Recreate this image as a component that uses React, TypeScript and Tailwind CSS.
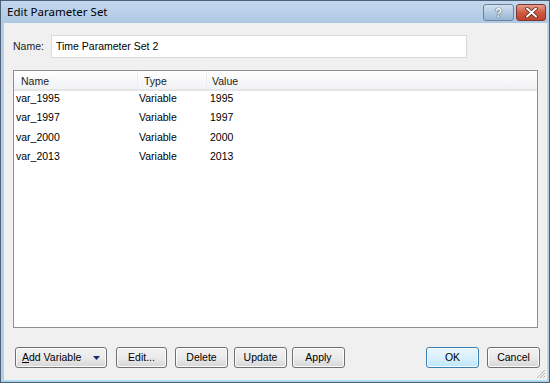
import React from "react";

const rows = [
  ["var_1995", "Variable", "1995"],
  ["var_1997", "Variable", "1997"],
  ["var_2000", "Variable", "2000"],
  ["var_2013", "Variable", "2013"],
];

function Btn({ children, className = "", ok = false }: { children: React.ReactNode; className?: string; ok?: boolean }) {
  return (
    <div
      className={
        "h-[21px] flex items-center justify-center rounded-[3px] border text-[10.5px] text-black " +
        (ok
          ? "border-[#3c7fb1] bg-gradient-to-b from-[#eaf6fd] via-[#d9f0fc] to-[#bee6fd] shadow-[inset_0_0_0_1px_#ffffff]"
          : "border-[#707070] bg-gradient-to-b from-[#f2f2f2] via-[#ebebeb] to-[#d6d6d6] shadow-[inset_0_0_0_1px_#fcfcfc]") +
        " " +
        className
      }
    >
      {children}
    </div>
  );
}

export default function App() {
  return (
    <div
      className="w-[550px] h-[383px] flex flex-col border border-[#4d6177] bg-[#b6cde6] overflow-hidden"
      style={{ fontFamily: '"Liberation Sans", Arial, sans-serif' }}
    >
      {/* Title bar */}
      <div className="h-[22px] flex items-center bg-gradient-to-b from-[#c3d8ee] to-[#aec8e3] relative">
        <span
          className="ml-[6px] text-[11.5px] text-black"
          style={{ fontFamily: '"Noto Sans", "Open Sans", sans-serif' }}
        >
          Edit Parameter Set
        </span>
        <div className="ml-auto mr-[3px] flex gap-[2px] self-start mt-[3px]">
          <div className="w-[31px] h-[17px] rounded-[3px] border border-[#6d829a] bg-gradient-to-b from-[#d4e2f0] via-[#b3cae2] to-[#9ab6d6] flex items-center justify-center">
            <span
              className="text-[12px] font-bold text-white leading-none"
              style={{ textShadow: "0 0 1px #2d3f55, 0 0 1px #2d3f55" }}
            >
              ?
            </span>
          </div>
          <div className="w-[30px] h-[17px] rounded-[3px] border border-[#7a3a30] bg-gradient-to-b from-[#e59d8c] via-[#cf5a43] to-[#c0412b] flex items-center justify-center">
            <svg width="13" height="11" viewBox="0 0 13 11">
              <path d="M2 1.5 L11 9.5 M11 1.5 L2 9.5" stroke="#5a1f17" strokeWidth="3.6" strokeLinecap="round" />
              <path d="M2 1.5 L11 9.5 M11 1.5 L2 9.5" stroke="#ffffff" strokeWidth="2" strokeLinecap="round" />
            </svg>
          </div>
        </div>
      </div>

      {/* Body */}
      <div className="flex-1 ml-[3px] mr-[1px] mb-[1px] bg-[#f0f0f0] border-r border-b border-[#9fe3f5] flex flex-col relative">
        {/* Name row */}
        <div className="flex items-center mt-[12px] h-[23px]">
          <span className="ml-[9px] text-[10.5px] text-[#222]">Name:</span>
          <div className="ml-[7px] w-[416px] h-[23px] bg-white border border-[#d8d8d8] flex items-center pl-[4px] text-[10.5px] text-black">
            Time Parameter Set 2
          </div>
        </div>

        {/* List */}
        <div className="mt-[12px] ml-[9px] w-[525px] h-[258px] bg-white border border-[#8e8f8f] flex flex-col">
          <div className="h-[20px] shrink-0 pt-[3px] flex items-center bg-gradient-to-b from-white to-[#f1f2f4] border-b-2 border-[#e4e5e7] text-[10.5px] text-[#222] relative">
            <span className="absolute left-[7px]">Name</span>
            <div className="absolute left-[123px] top-0 h-full w-px bg-[#ececee]" />
            <span className="absolute left-[130px]">Type</span>
            <div className="absolute left-[192px] top-0 h-full w-px bg-[#ececee]" />
            <span className="absolute left-[198px]">Value</span>
          </div>
          <div className="flex flex-col mt-[-2px]">
            {rows.map((r) => (
              <div key={r[0]} className="h-[19.5px] flex items-center text-[10.5px] text-black">
                <span className="w-[125px] pl-[2px]">{r[0]}</span>
                <span className="w-[71px]">{r[1]}</span>
                <span>{r[2]}</span>
              </div>
            ))}
          </div>
        </div>

        {/* Buttons */}
        <div className="flex items-center mt-[19px] ml-[11px]">
          <Btn className="w-[92px] justify-start pl-[6px]">
            <span>
              <span className="underline">A</span>dd Variable
            </span>
            <svg className="ml-[12px]" width="7" height="4" viewBox="0 0 7 4">
              <path d="M0 0 L7 0 L3.5 4 Z" fill="#1c2a6e" />
            </svg>
          </Btn>
          <Btn className="w-[51px] ml-[9px]">Edit...</Btn>
          <Btn className="w-[53px] ml-[8px]">Delete</Btn>
          <Btn className="w-[53px] ml-[6px]">Update</Btn>
          <Btn className="w-[53px] ml-[5px]">Apply</Btn>
          <Btn ok className="w-[53px] ml-[81px]">OK</Btn>
          <Btn className="w-[53px] ml-[8px]">Cancel</Btn>
        </div>

        {/* Grip */}
        <svg className="absolute right-[1px] bottom-[1px]" width="10" height="10" viewBox="0 0 10 10">
          <path d="M9 1 L1 9 M9 4 L4 9 M9 7 L7 9" stroke="#b0b0b0" strokeWidth="1" />
        </svg>
      </div>
    </div>
  );
}
